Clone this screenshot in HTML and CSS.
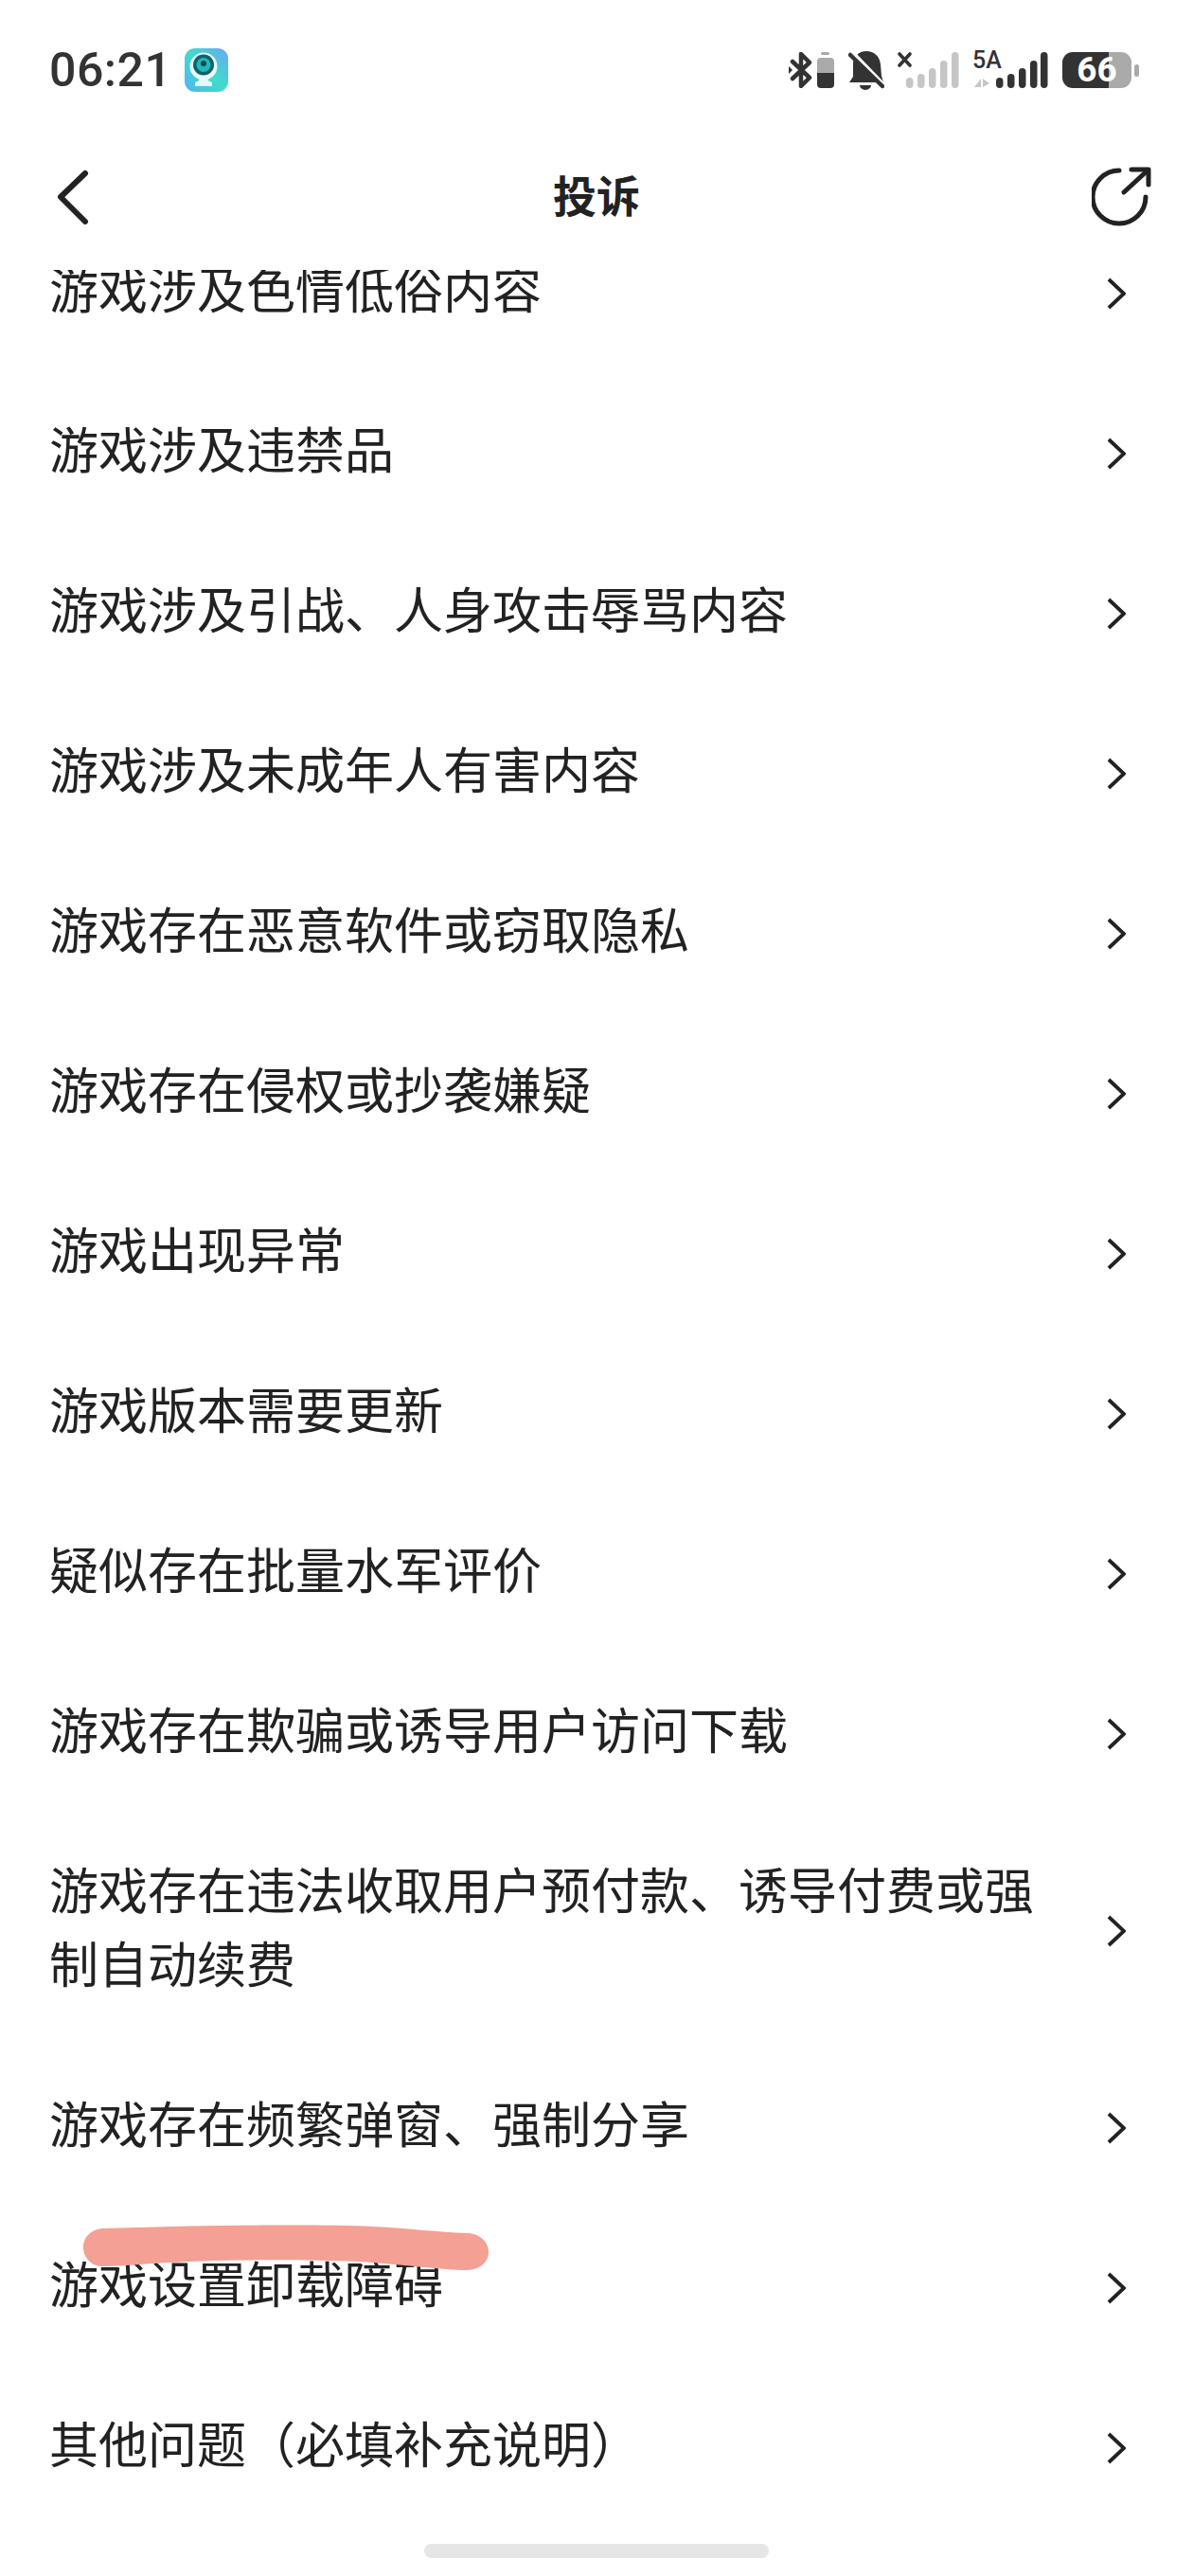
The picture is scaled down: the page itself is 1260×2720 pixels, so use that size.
FILE: index.html
```html
<!DOCTYPE html>
<html lang="zh-CN">
<head>
    <meta charset="UTF-8">
    <meta name="viewport" content="width=device-width, initial-scale=1.0">
    <title>投诉</title>
    <link rel="stylesheet" href="styles.css">
</head>
<body>

<div class="page">
    <div class="status-bar">
        <div class="status-left">
            <span class="time">06:21</span>
            <svg class="app-icon" width="46" height="46" viewBox="0 0 46 46">
                <defs>
                    <linearGradient id="appBg" x1="0" y1="1" x2="1" y2="0">
                        <stop offset="0" stop-color="#4fb4f5"/>
                        <stop offset="0.5" stop-color="#3fdccb"/>
                        <stop offset="1" stop-color="#6da6f5"/>
                    </linearGradient>
                </defs>
                <rect width="46" height="46" rx="11" fill="url(#appBg)"/>
                <path d="M16 30h8l1 4 4 2v4H11v-4l4-2z" fill="#e6f8f7"/>
                <circle cx="20" cy="19" r="14.5" fill="#e6f8f7"/>
                <circle cx="20" cy="17.5" r="11" fill="#0f5f6a"/>
                <circle cx="20" cy="17.5" r="7.5" fill="#1fb8b6"/>
                <circle cx="20" cy="16" r="3" fill="#17454f"/>
            </svg>
        </div>
        <div class="status-right">
            <svg class="ic-bt" width="26" height="38" viewBox="0 0 26 38">
                <path d="M4 10l18 17-9 9V2l9 9L4 28" fill="none" stroke="#333" stroke-width="4.5" stroke-linecap="round" stroke-linejoin="round"/>
                <path d="M0 15l4 4-4 4z" fill="#333"/>
            </svg>
            <svg class="ic-minibatt" width="18" height="38" viewBox="0 0 18 38">
                <rect x="4" y="0" width="9" height="3" rx="1.5" fill="#aaa"/>
                <path d="M4 6h10a4 4 0 0 1 4 4v12H0V10a4 4 0 0 1 4-4z" fill="#aaa"/>
                <path d="M0 22h18v12a4 4 0 0 1-4 4H4a4 4 0 0 1-4-4z" fill="#333"/>
            </svg>
            <svg class="ic-bell" width="38" height="42" viewBox="0 0 38 42">
                <path d="M19 1c8 0 14 5 15 14l1 12 2 7H1l4-6V14C5 7 11 1 19 1z" fill="#333"/>
                <path d="M12 37a6 5 0 0 0 12 0z" fill="#333"/>
                <path d="M5 3l32 33" stroke="#fff" stroke-width="4"/>
                <path d="M2 5l34 33" stroke="#333" stroke-width="4.5" stroke-linecap="round"/>
            </svg>
            <svg class="ic-signal-off" width="66" height="40" viewBox="0 0 66 40">
                <path d="M2 3l11 12M13 3L2 15" stroke="#333" stroke-width="3.6" stroke-linecap="round"/>
                <g fill="#c6c6c6">
                    <rect x="9" y="28" width="7.5" height="11" rx="3.7"/>
                    <rect x="21" y="24" width="7.5" height="15" rx="3.7"/>
                    <rect x="33" y="18" width="7.5" height="21" rx="3.7"/>
                    <rect x="45" y="10" width="7.5" height="29" rx="3.7"/>
                    <rect x="57" y="1" width="7.5" height="38" rx="3.7"/>
                </g>
            </svg>
            <div class="signal-on">
                <span class="net-label">5A</span>
                <svg width="80" height="40" viewBox="0 0 80 40">
                    <path d="M2 38l7-9v9zM11 29v9l7-4z" fill="#c6c6c6"/>
                    <g fill="#333">
                        <rect x="25" y="28" width="7.5" height="11" rx="3.7"/>
                        <rect x="37" y="24" width="7.5" height="15" rx="3.7"/>
                        <rect x="49" y="18" width="7.5" height="21" rx="3.7"/>
                        <rect x="61" y="10" width="7.5" height="29" rx="3.7"/>
                        <rect x="72" y="1" width="7.5" height="38" rx="3.7"/>
                    </g>
                </svg>
            </div>
            <div class="battery">
                <span class="batt-label">66</span>
            </div>
        </div>
    </div>

    <div class="nav">
        <svg class="nav-back" width="34" height="60" viewBox="0 0 34 60" fill="none" stroke="#222" stroke-width="6" stroke-linecap="round" stroke-linejoin="round">
            <path d="M30 6L4 31l26 26"/>
        </svg>
        <div class="nav-title">投诉</div>
        <svg class="nav-share" width="66" height="64" viewBox="0 0 66 64" fill="none" stroke="#222" stroke-width="5" stroke-linecap="round">
            <path d="M29 5A28 28 0 1 0 57 33"/>
            <path d="M34 28L59 5"/>
            <path d="M42 4h18v16" stroke-linejoin="round"/>
        </svg>
    </div>

    <ul class="issue-list">
        <li class="issue-row"><span class="issue-text">游戏涉及色情低俗内容</span><svg class="chevron" viewBox="0 0 20 34"><path d="M2 2l16 15L2 32"/></svg></li>
        <li class="issue-row"><span class="issue-text">游戏涉及违禁品</span><svg class="chevron" viewBox="0 0 20 34"><path d="M2 2l16 15L2 32"/></svg></li>
        <li class="issue-row"><span class="issue-text">游戏涉及引战、人身攻击辱骂内容</span><svg class="chevron" viewBox="0 0 20 34"><path d="M2 2l16 15L2 32"/></svg></li>
        <li class="issue-row"><span class="issue-text">游戏涉及未成年人有害内容</span><svg class="chevron" viewBox="0 0 20 34"><path d="M2 2l16 15L2 32"/></svg></li>
        <li class="issue-row"><span class="issue-text">游戏存在恶意软件或窃取隐私</span><svg class="chevron" viewBox="0 0 20 34"><path d="M2 2l16 15L2 32"/></svg></li>
        <li class="issue-row"><span class="issue-text">游戏存在侵权或抄袭嫌疑</span><svg class="chevron" viewBox="0 0 20 34"><path d="M2 2l16 15L2 32"/></svg></li>
        <li class="issue-row"><span class="issue-text">游戏出现异常</span><svg class="chevron" viewBox="0 0 20 34"><path d="M2 2l16 15L2 32"/></svg></li>
        <li class="issue-row"><span class="issue-text">游戏版本需要更新</span><svg class="chevron" viewBox="0 0 20 34"><path d="M2 2l16 15L2 32"/></svg></li>
        <li class="issue-row"><span class="issue-text">疑似存在批量水军评价</span><svg class="chevron" viewBox="0 0 20 34"><path d="M2 2l16 15L2 32"/></svg></li>
        <li class="issue-row"><span class="issue-text">游戏存在欺骗或诱导用户访问下载</span><svg class="chevron" viewBox="0 0 20 34"><path d="M2 2l16 15L2 32"/></svg></li>
        <li class="issue-row"><span class="issue-text">游戏存在违法收取用户预付款、诱导付费或强制自动续费</span><svg class="chevron" viewBox="0 0 20 34"><path d="M2 2l16 15L2 32"/></svg></li>
        <li class="issue-row"><span class="issue-text">游戏存在频繁弹窗、强制分享</span><svg class="chevron" viewBox="0 0 20 34"><path d="M2 2l16 15L2 32"/></svg></li>
        <li class="issue-row"><span class="issue-text">游戏设置卸载障碍</span><svg class="chevron" viewBox="0 0 20 34"><path d="M2 2l16 15L2 32"/></svg></li>
        <li class="issue-row"><span class="issue-text">其他问题（必填补充说明）</span><svg class="chevron" viewBox="0 0 20 34"><path d="M2 2l16 15L2 32"/></svg></li>
    </ul>

    <div class="home-bar"></div>

    <!-- scribble drawn on top of the screenshot -->
    <svg class="scribble" width="429" height="50" viewBox="0 0 429 50">
        <path d="M22 4C120 1 240-1 305 2c40 2 70 6 100 7 13 0 23 9 23 20s-10 19-23 19c-25 0-65-6-115-9-70-3-160-2-230 3-15 1-28 2-40 2C8 44 0 34 0 24 0 13 9 4 22 4z" fill="#f4a094"/>
    </svg>
</div>

</body>
</html>
```

FILE: styles.css
```css
* {
    box-sizing: border-box;
}

html, body {
    margin: 0;
    padding: 0;
    background-color: #fff;
}

body {
    font-family: "Noto Sans CJK SC", "Noto Sans", sans-serif;
    color: #222;
}

.page {
    position: relative;
    width: 1260px;
    height: 2720px;
    overflow: hidden;
}

/* status bar */
.status-bar {
    display: flex;
    justify-content: space-between;
    align-items: flex-start;
    height: 130px;
    padding: 51px 57px 0 52px;
}

.status-left {
    display: flex;
    align-items: center;
    gap: 14px;
}

.time {
    font-family: Roboto, sans-serif;
    font-size: 50px;
    font-weight: 500;
    line-height: 46px;
    letter-spacing: 0.5px;
    color: #333;
}

.status-right {
    display: flex;
    align-items: flex-start;
    margin-top: 4px;
}

.ic-minibatt {
    margin-left: 4px;
}

.ic-bell {
    margin: -2px 0 0 15px;
}

.ic-signal-off {
    margin: -1px 0 0 14px;
}

.signal-on {
    position: relative;
    width: 80px;
    height: 40px;
    margin: -1px 0 0 13px;
}

.net-label {
    position: absolute;
    left: 0;
    top: 0;
    font-family: Roboto, sans-serif;
    font-size: 25px;
    font-weight: 500;
    line-height: 20px;
    color: #333;
}

.battery {
    position: relative;
    display: flex;
    justify-content: center;
    width: 73px;
    height: 38px;
    margin: 0 8px 0 15px;
    background: linear-gradient(90deg, #333 49px, #aaa 49px);
    border-radius: 11px;
}

.battery::after {
    content: "";
    position: absolute;
    left: 76px;
    top: 13px;
    width: 5px;
    height: 13px;
    background-color: #aaa;
    border-radius: 3px;
}

.batt-label {
    font-family: Roboto, sans-serif;
    font-size: 37px;
    font-weight: 700;
    line-height: 38px;
    color: #fff;
}

.nav {
    position: relative;
    z-index: 1;
    display: grid;
    grid-template-columns: 1fr auto 1fr;
    align-items: start;
    height: 155px;
    padding: 47px 41px 0;
    background-color: #fff;
}

.nav-back {
    margin-left: 19px;
}

.nav-title {
    margin-top: -3px;
    font-size: 46px;
    font-weight: 700;
    line-height: 60px;
    color: #222;
}

.nav-share {
    justify-self: end;
    margin-top: -2px;
}

/* list */
.issue-list {
    list-style: none;
    margin: -66px 0 0;
    padding: 0;
}

.issue-row {
    display: flex;
    justify-content: space-between;
    align-items: center;
    padding: 45.5px 71px 45.5px 52px;
    font-size: 52px;
    line-height: 78px;
}

.issue-text {
    width: 1060px;
}

.chevron {
    width: 20px;
    height: 34px;
    margin-top: 12px;
    fill: none;
    stroke: #222;
    stroke-width: 3.8;
}

.home-bar {
    width: 364px;
    height: 15px;
    margin: 23px auto 0;
    background-color: #e6e6e6;
    border-radius: 8px;
}

.scribble {
    position: absolute;
    z-index: 2;
    left: 88px;
    top: 2349px;
}
```
